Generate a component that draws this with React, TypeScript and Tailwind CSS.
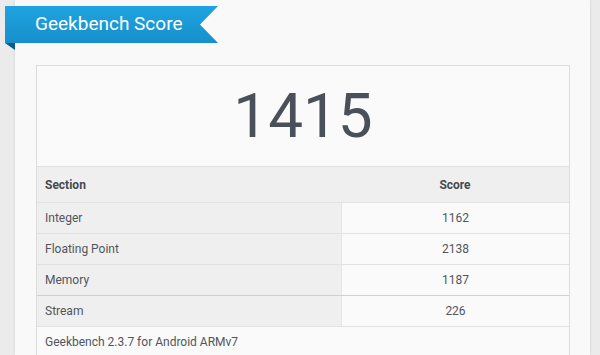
import React from "react";

const rows = [
  { name: "Integer", score: 1162 },
  { name: "Floating Point", score: 2138 },
  { name: "Memory", score: 1187 },
  { name: "Stream", score: 226 },
];

export default function App() {
  return (
    <div
      className="flex h-[355px] w-[600px] overflow-hidden bg-[#ebebeb]"
      style={{ fontFamily: "Roboto, 'Liberation Sans', sans-serif" }}
    >
      <div className="ml-[15px] flex w-[575px] flex-col bg-[#f9f9f9] shadow-[0_0_3px_rgba(0,0,0,0.12)]">
        {/* ribbon */}
        <div className="relative -ml-[10px] mt-[6px] h-[44px] w-[213px]">
          <div className="flex h-[37px] w-[213px] items-center bg-gradient-to-b from-[#1fa3e0] to-[#1690cc] pl-[30px] text-[19px] text-white [clip-path:polygon(0_0,100%_0,calc(100%_-_18px)_50%,100%_100%,0_100%)]">
            Geekbench Score
          </div>
          <div className="h-[7px] w-[10px] bg-[#0d5c85] [clip-path:polygon(0_0,100%_0,100%_100%)]" />
        </div>

        {/* results box */}
        <div className="ml-[21px] mt-[15px] w-[534px] border border-[#dcdcdc] bg-white">
          <div className="flex h-[100px] items-center justify-center bg-[#fafafa] text-[62px] leading-none text-[#4a5059]">
            1415
          </div>
          <div className="flex h-[36px] items-center border-t border-[#e2e2e2] bg-[#efefef] text-[12px] font-bold text-[#444a52]">
            <div className="w-[304px] pl-[8px]">Section</div>
            <div className="flex-1 text-center">Score</div>
          </div>
          {rows.map((r, i) => (
            <div
              key={r.name}
              className={
                i === 3
                  ? "flex h-[31px] border-t border-[#d0d0d0] text-[12px] text-[#50565e]"
                  : "flex h-[31px] border-t border-[#e2e2e2] text-[12px] text-[#50565e]"
              }
            >
              <div className="flex w-[304px] items-center bg-[#efefef] pl-[8px]">{r.name}</div>
              <div className="flex flex-1 items-center justify-center border-l border-[#e6e6e6] bg-[#fafafa]">
                {r.score}
              </div>
            </div>
          ))}
          <div className="flex h-[31px] items-center border-t border-[#e2e2e2] bg-[#fafafa] pl-[8px] text-[12px] text-[#50565e]">
            Geekbench 2.3.7 for Android ARMv7
          </div>
        </div>
      </div>
    </div>
  );
}
